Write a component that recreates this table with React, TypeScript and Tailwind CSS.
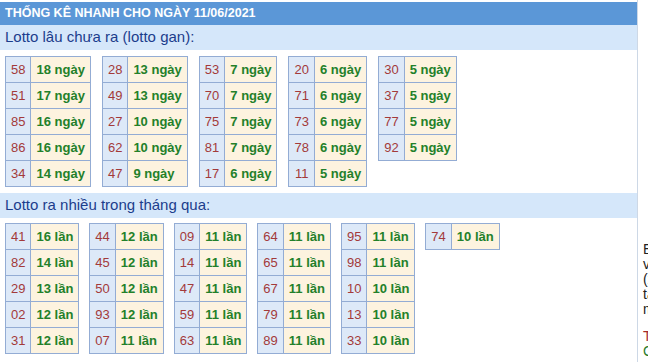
import React from "react";

type Pair = [string, string];

const ganTables: Pair[][] = [
  [["58", "18"], ["51", "17"], ["85", "16"], ["86", "16"], ["34", "14"]],
  [["28", "13"], ["49", "13"], ["27", "10"], ["62", "10"], ["47", "9"]],
  [["53", "7"], ["70", "7"], ["75", "7"], ["81", "7"], ["17", "6"]],
  [["20", "6"], ["71", "6"], ["73", "6"], ["78", "6"], ["11", "5"]],
  [["30", "5"], ["37", "5"], ["77", "5"], ["92", "5"]],
];

const nhieuTables: Pair[][] = [
  [["41", "16"], ["82", "14"], ["29", "13"], ["02", "12"], ["31", "12"]],
  [["44", "12"], ["45", "12"], ["50", "12"], ["93", "12"], ["07", "11"]],
  [["09", "11"], ["14", "11"], ["47", "11"], ["59", "11"], ["63", "11"]],
  [["64", "11"], ["65", "11"], ["67", "11"], ["79", "11"], ["89", "11"]],
  [["95", "11"], ["98", "11"], ["10", "10"], ["13", "10"], ["33", "10"]],
  [["74", "10"]],
];

function LottoTable({ rows, unit }: { rows: Pair[]; unit: string }) {
  return (
    <table className="border-collapse text-[13px]">
      <tbody>
        {rows.map(([num, count]) => (
          <tr key={num}>
            <td className="h-[26px] border border-[#93acd4] bg-[#dde9f8] px-[5px] py-0 text-center text-[#a33a3a]">
              {num}
            </td>
            <td className="h-[26px] border border-[#93acd4] bg-[#fdf3df] px-[5px] py-0 font-bold text-[#23802a]">
              {count} {unit}
            </td>
          </tr>
        ))}
      </tbody>
    </table>
  );
}

export default function App() {
  return (
    <div className="flex h-[362px] w-[648px] overflow-hidden bg-white font-['Liberation_Sans',Arial,sans-serif]">
      {/* Main panel */}
      <div className="w-[638px] shrink-0 border-r border-[#cdd8e6] pt-[2px]">
        <div className="flex h-[23px] items-center bg-[#5b97d7] px-[5px] text-[12.5px] font-bold text-white">
          THỐNG KÊ NHANH CHO NGÀY 11/06/2021
        </div>
        <div className="flex h-[25px] items-center bg-[#d5e7fa] px-[5px] text-[15px] text-[#1c3d8c]">
          Lotto lâu chưa ra (lotto gan):
        </div>
        <div className="flex items-start gap-[11px] px-[5px] py-[6px]">
          {ganTables.map((rows, i) => (
            <LottoTable key={i} rows={rows} unit="ngày" />
          ))}
        </div>
        <div className="flex h-[25px] items-center bg-[#d5e7fa] px-[5px] text-[15px] text-[#1c3d8c]">
          Lotto ra nhiều trong tháng qua:
        </div>
        <div className="flex items-start gap-[10px] px-[5px] pt-[5px]">
          {nhieuTables.map((rows, i) => (
            <LottoTable key={i} rows={rows} unit="lần" />
          ))}
        </div>
      </div>

      {/* Sidebar (cut off by the window edge) */}
      <div className="w-[200px] shrink-0 pl-[5px] pt-[242px] text-[14px] leading-[15px] text-[#222]">
        <p>Em xem</p>
        <p>vào ngày</p>
        <p>(xổ số)</p>
        <p>tại đây</p>
        <p>mới nhất</p>
        <p className="mt-[12px] text-[#a32a2a]">Thống kê</p>
        <p className="text-[#2a7a2a]">Cầu lô</p>
      </div>
    </div>
  );
}
